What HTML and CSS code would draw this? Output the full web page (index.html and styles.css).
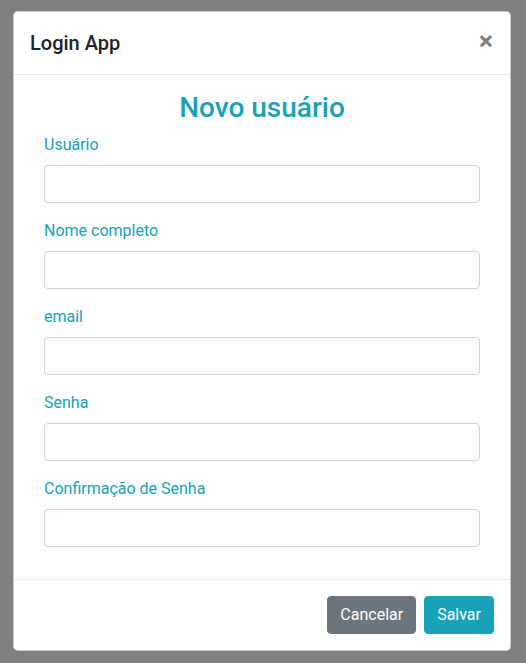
FILE: index.html
```html
<!DOCTYPE html>
<html lang="pt-BR">
<head>
<meta charset="utf-8">
<title>Login App</title>
<link rel="stylesheet" href="styles.css">
</head>
<body>
<div class="modal">
  <div class="modal-header">
    <h5 class="modal-title">Login App</h5>
    <button class="close" type="button" aria-label="Close">&times;</button>
  </div>
  <div class="modal-body">
    <h3 class="form-title">Novo usuário</h3>
    <form class="form">
      <div class="form-group">
        <label class="form-label">Usuário</label>
        <input class="form-control" type="text">
      </div>
      <div class="form-group">
        <label class="form-label">Nome completo</label>
        <input class="form-control" type="text">
      </div>
      <div class="form-group">
        <label class="form-label">email</label>
        <input class="form-control" type="email">
      </div>
      <div class="form-group">
        <label class="form-label">Senha</label>
        <input class="form-control" type="password">
      </div>
      <div class="form-group">
        <label class="form-label">Confirmação de Senha</label>
        <input class="form-control" type="password">
      </div>
    </form>
  </div>
  <div class="modal-footer">
    <button class="btn btn-secondary" type="button">Cancelar</button>
    <button class="btn btn-info" type="button">Salvar</button>
  </div>
</div>
</body>
</html>
```

FILE: styles.css
```css
* { box-sizing: border-box; }
html, body { height: 100%; }
body {
  margin: 0;
  padding: 11px 15px 0 13px;
  background: #808080;
  font-family: Roboto, Inter, "Liberation Sans", sans-serif;
  font-size: 16px;
  line-height: 1.5;
  color: #212529;
}
.modal {
  width: 498px;
  background: #fff;
  border: 1px solid rgba(0,0,0,.2);
  border-radius: 4.8px;
  display: flex;
  flex-direction: column;
}
.modal-header {
  display: flex;
  align-items: flex-start;
  justify-content: space-between;
  padding: 16px;
  border-bottom: 1px solid #e9ecef;
}
.modal-title {
  margin: 0;
  font-size: 20px;
  font-weight: 500;
  line-height: 30px;
}
.close {
  padding: 16px;
  margin: -16px -16px -16px auto;
  background: transparent;
  border: 0;
  font-family: Inter, sans-serif;
  font-size: 24px;
  font-weight: 700;
  line-height: 1;
  color: #000;
  opacity: .5;
  text-shadow: 0 1px 0 #fff;
  cursor: pointer;
}
.modal-body {
  padding: 16px 30px;
}
.form-title {
  margin: 0 0 8px;
  text-align: center;
  color: #17a2b8;
  font-size: 28px;
  font-weight: 500;
  line-height: 34px;
}
.form { margin: 0; }
.form-group {
  display: flex;
  flex-direction: column;
  margin-bottom: 16px;
}
.form-label {
  color: #17a2b8;
  margin-bottom: 8px;
  line-height: 24px;
}
.form-control {
  display: block;
  width: 100%;
  height: 38px;
  padding: 6px 12px;
  font-family: inherit;
  font-size: 16px;
  color: #495057;
  background: #fff;
  border: 1px solid #ced4da;
  border-radius: 4px;
}
.modal-footer {
  display: flex;
  justify-content: flex-end;
  align-items: center;
  gap: 8px;
  padding: 16px;
  border-top: 1px solid #e9ecef;
}
.btn {
  height: 38px;
  padding: 6px 12px;
  font-family: inherit;
  font-size: 16px;
  line-height: 24px;
  color: #fff;
  border: 1px solid transparent;
  border-radius: 4px;
  cursor: pointer;
}
.btn-secondary { background: #6c757d; border-color: #6c757d; }
.btn-info { background: #17a2b8; border-color: #17a2b8; }
```
